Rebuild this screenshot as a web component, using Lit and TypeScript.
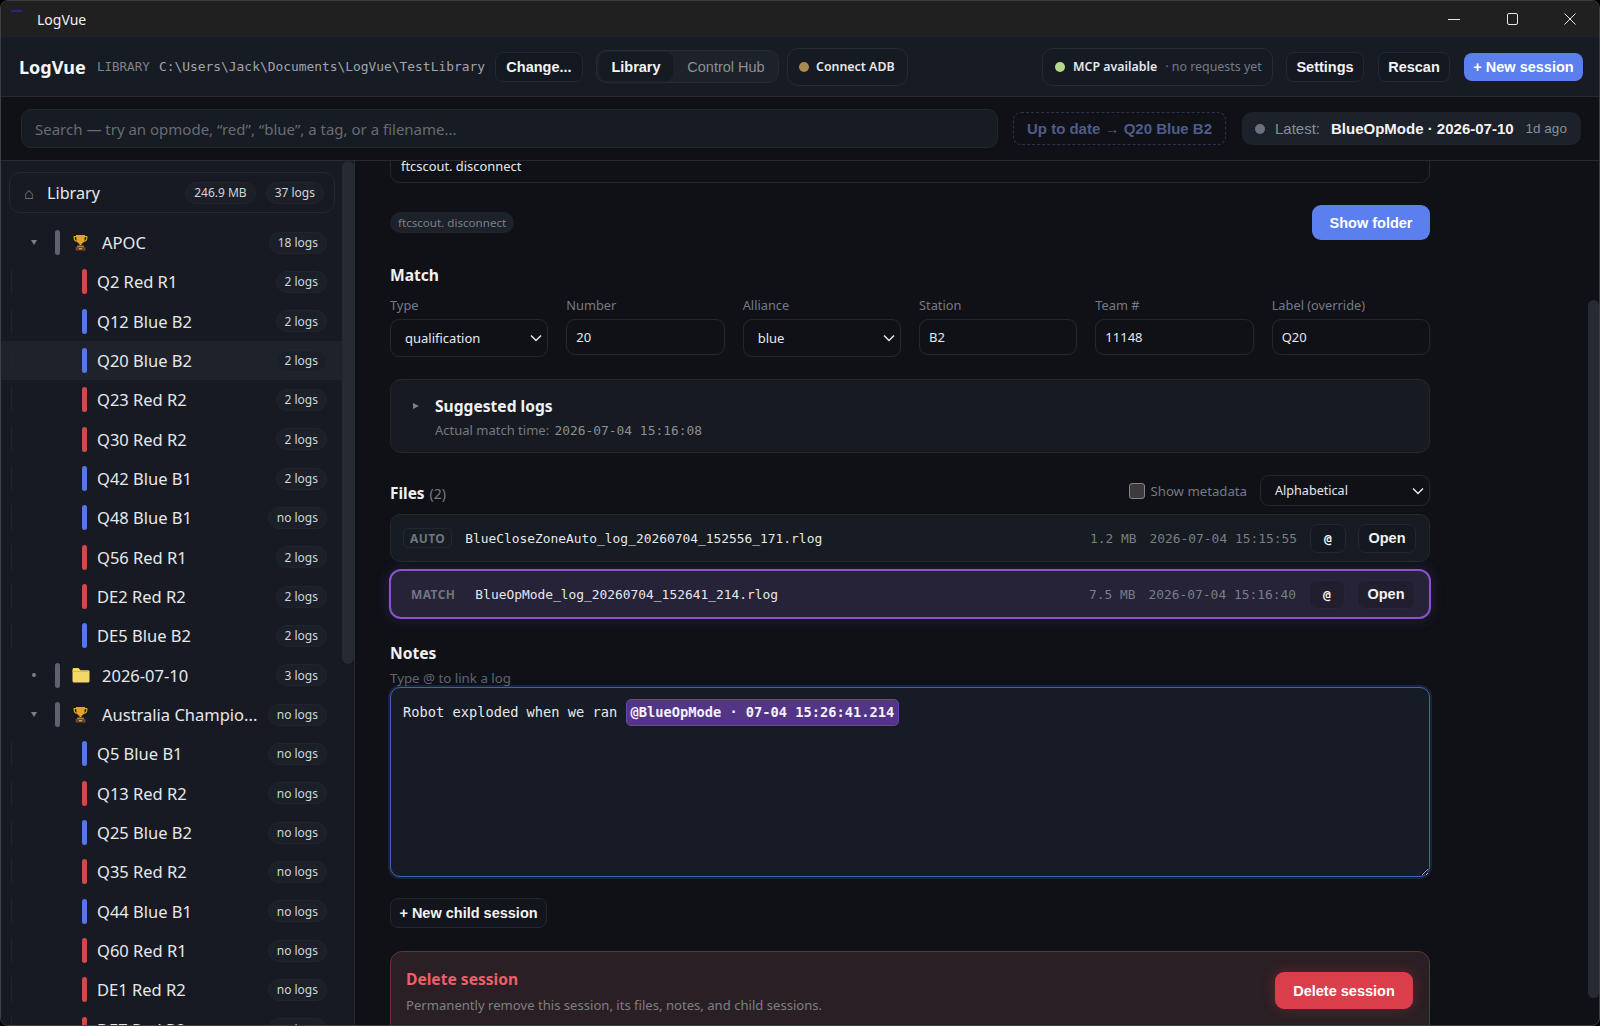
import { LitElement, html, css, svg } from "lit";
import { customElement } from "lit/decorators.js";

type Row = { kind: "group" | "item"; label: string; logs: string; alliance?: "red" | "blue"; icon?: "trophy" | "folder"; caret?: "down" | "dot"; selected?: boolean };

const item = (label: string, logs: string, selected = false): Row => ({
  kind: "item", label, logs, selected,
  alliance: label.includes("Red") ? "red" : "blue",
});

const rows: Row[] = [
  { kind: "group", label: "APOC", logs: "18 logs", icon: "trophy", caret: "down" },
  item("Q2 Red R1", "2 logs"),
  item("Q12 Blue B2", "2 logs"),
  item("Q20 Blue B2", "2 logs", true),
  item("Q23 Red R2", "2 logs"),
  item("Q30 Red R2", "2 logs"),
  item("Q42 Blue B1", "2 logs"),
  item("Q48 Blue B1", "no logs"),
  item("Q56 Red R1", "2 logs"),
  item("DE2 Red R2", "2 logs"),
  item("DE5 Blue B2", "2 logs"),
  { kind: "group", label: "2026-07-10", logs: "3 logs", icon: "folder", caret: "dot" },
  { kind: "group", label: "Australia Champio...", logs: "no logs", icon: "trophy", caret: "down" },
  item("Q5 Blue B1", "no logs"),
  item("Q13 Red R2", "no logs"),
  item("Q25 Blue B2", "no logs"),
  item("Q35 Red R2", "no logs"),
  item("Q44 Blue B1", "no logs"),
  item("Q60 Red R1", "no logs"),
  item("DE1 Red R2", "no logs"),
  item("DE7 Red R2", "no logs"),
];

const trophy = svg`<svg width="15" height="17" viewBox="0 0 15 17"><path d="M3 1h9v1h2.400v2.200c0 2-1.300 3.300-3.400 3.600-.6 1-1.400 1.600-2.400 1.900V11h-2.200V9.700c-1-.3-1.800-.9-2.400-1.900C1.900 7.500.6 6.200.6 4.200V2H3zM1.800 3.200v1c0 1.200.7 2.100 1.800 2.400-.2-1-.3-2.100-.3-3.400zm11.400 0h-1.500c0 1.300-.1 2.400-.3 3.400 1.100-.3 1.800-1.200 1.800-2.400z" fill="#e2a32e"/><path d="M4.500 11.500h6l.6 1.500H3.900z" fill="#b8842c"/><rect x="2.500" y="13" width="10" height="3.500" rx=".5" fill="#6b4a34"/><rect x="6" y="14" width="3" height="1.300" fill="#cfa45a"/></svg>`;
const folder = svg`<svg class="fld" width="18" height="16" viewBox="0 0 18 16"><path d="M.5 2.500C.5 1.700 1.100 1 2 1h4.500l2 2.200H16c.9 0 1.500.6 1.500 1.500V14c0 .8-.6 1.500-1.500 1.500H2C1.100 15.500.5 14.800.5 14z" fill="#f3d868"/><path d="M.5 4h17v1H.5z" fill="#d9b84c"/></svg>`;
const chevron = svg`<svg class="chev" width="12" height="8" viewBox="0 0 12 8"><path d="M1 1.500l5 5 5-5" fill="none" stroke="#e6e8ec" stroke-width="1.500"/></svg>`;

@customElement("app-root")
export class AppRoot extends LitElement {
  static styles = css`
    :host { display: block; width: 1600px; height: 1026px; background: #000; font-family: "Noto Sans", sans-serif; color: #e6e8ec; overflow: hidden; }
    * { box-sizing: border-box; }
    button { font-family: "Liberation Sans", Arial, sans-serif; font-weight: 700; font-size: 14.5px; color: #f2f3f5; cursor: pointer; padding: 0; white-space: nowrap; }
    .mono { font-family: "DejaVu Sans Mono", monospace; font-size: 12.9px; }
    .window { width: 1600px; height: 1026px; border: 1px solid #3c3f44; border-radius: 8px; overflow: hidden; display: flex; flex-direction: column; background: #0f1117; position: relative; }

    .title { height: 36px; flex: none; background: #202020; display: flex; align-items: center; padding-left: 36px; font-size: 14px; color: #f0f0f0; position: relative; }
    .appglyph { position: absolute; left: 10px; top: 9px; width: 11px; height: 2px; background: #23238c; }
    .winctl { margin-left: auto; display: flex; align-items: center; height: 100%; }
    .winctl div { width: 58px; display: flex; justify-content: center; align-items: center; }

    .head { height: 60px; flex: none; background: #171b24; border-bottom: 1px solid #262a32; display: flex; align-items: center; padding-left: 18px; padding-right: 16px; }
    .brand { font-size: 18px; font-weight: 700; color: #f5f6f8; width: 78px; }
    .libl { font-size: 12.5px; color: #7d838d; width: 62px; }
    .path { color: #a0a5ad; width: 336px; white-space: nowrap; }
    .btn { height: 30px; background: #141821; border: 1px solid #242832; border-radius: 8px; }
    .change { width: 88px; }
    .tabs { margin-left: 13px; height: 33px; width: 183px; background: #1d2129; border: 1px solid #262a33; border-radius: 10px; display: flex; align-items: center; padding: 0 2px; }
    .tab { height: 29px; border: 0; background: none; border-radius: 8px; width: 74px; }
    .tab.on { background: #161a22; }
    .tab.off { font-weight: 400; color: #8a8f98; flex: 1; padding-left: 3px; }
    .pill { height: 38px; border: 1px solid #262a33; border-radius: 11px; display: flex; align-items: center; background: #161a23; font-size: 12.4px; font-weight: 600; white-space: nowrap; }
    .adb { margin-left: 8px; width: 121px; padding-left: 11px; gap: 7px; }
    .dot { width: 10px; height: 10px; border-radius: 50%; flex: none; }
    .mcp { margin-left: auto; width: 231px; padding-left: 12px; gap: 8px; }
    .mcp em { font-style: normal; font-weight: 400; color: #767c86; }
    .settings { margin-left: 13px; width: 78px; }
    .rescan { margin-left: 14px; width: 72px; }
    .new { margin-left: 14px; width: 119px; height: 28px; background: #5b7fee; border: 0; color: #fff; }

    .search { height: 64px; flex: none; background: #0f1117; border-bottom: 1px solid #262a32; display: flex; align-items: center; padding-left: 20px; padding-right: 18px; }
    .sbox { width: 977px; height: 39px; background: #171b22; border: 1px solid #23272f; border-radius: 10px; padding-left: 13px; display: flex; align-items: center; font-size: 15px; color: #676c75; }
    .uptodate { margin-left: 15px; width: 213px; height: 33px; background: none; border: 1px dashed #2c3350; border-radius: 8px; color: #4f5c88; font-size: 15px; }
    .latest { margin-left: 16px; width: 339px; height: 33px; background: #1d2129; border: 0; border-radius: 10px; display: flex; align-items: center; padding-left: 13px; font-size: 15px; }
    .latest .l { font-weight: 400; color: #8a8f98; margin-left: 10px; }
    .latest .b { margin-left: 11px; color: #f2f3f5; }
    .latest .a { font-weight: 400; color: #8a8f98; margin-left: 12px; font-size: 13.5px; }

    .body { flex: 1; min-height: 0; display: flex; }
    .side { width: 354px; flex: none; background: #171a22; border-right: 1px solid #262a32; overflow: hidden; position: relative; padding: 11px 0 0 0; }
    .thumb { position: absolute; background: #262b33; border-radius: 6px; }
    .side .thumb { right: 0; top: 0; width: 12px; height: 503px; }
    .libr { margin-left: 8px; width: 326px; height: 41px; border: 1px solid #23272f; border-radius: 11px; display: flex; align-items: center; padding-left: 14px; font-size: 16.2px; color: #e6e8ec; margin-bottom: 10px; }
    .libr .home { color: #7a808a; width: 23px; font-size: 16px; }
    .chip { border: 1px solid #20242c; background: #1b1f27; border-radius: 11px; height: 22px; padding: 0 8px; display: flex; align-items: center; font-size: 12px; color: #d2d5da; white-space: nowrap; flex: none; }
    .libr .size { margin-left: auto; }
    .libr .count { margin-left: 10px; margin-right: 10px; }
    .row { height: 39.33px; width: 341px; display: flex; align-items: center; font-size: 16.5px; color: #e6e8ec; position: relative; white-space: nowrap; padding-right: 15px; }
    .row.sel { background: #1e222a; }
    .row .chip { margin-left: auto; }
    .row.item { padding-left: 81px; }
    .row.item::before { content: ""; position: absolute; left: 10px; top: 7px; width: 1px; height: 25px; background: #20242c; }
    .row.group { padding-left: 27px; }
    .bar { width: 5px; height: 25px; border-radius: 3px; flex: none; }
    .bar.red { background: #d04a4a; }
    .bar.blue { background: #5577e8; }
    .bar.grey { background: #5c6370; }
    .item .bar { margin-right: 10px; }
    .caret { width: 27px; flex: none; display: flex; }
    .caret i { display: block; }
    .caret i.down { width: 0; height: 0; border-left: 3.5px solid transparent; border-right: 3.5px solid transparent; border-top: 5px solid #7a808a; margin-left: 3px; }
    .caret i.dot { width: 4px; height: 4px; border-radius: 50%; background: #7a808a; margin-left: 4px; }
    .gicon { width: 42px; flex: none; display: flex; padding-left: 13px; }
    .gicon svg { display: block; flex: none; }
    .gicon .fld { margin-left: -1px; }

    .main { flex: 1; min-width: 0; position: relative; overflow: hidden; padding-left: 35px; }
    .main .thumb { right: 0; top: 139px; width: 11px; height: 698px; }
    .content { width: 1040px; margin-top: -12px; }
    .field { height: 34px; border: 1px solid #23272f; border-radius: 10px; display: flex; align-items: center; padding-left: 10px; font-size: 12.9px; color: #e6e8ec; }
    .tagrow { display: flex; justify-content: space-between; align-items: flex-start; margin-top: 22px; height: 35px; }
    .tag { margin-top: 7px; height: 21px; background: #1d2129; border-radius: 11px; padding: 0 8px; display: flex; align-items: center; font-size: 11.6px; color: #7a808a; }
    .primary { width: 118px; height: 35px; background: #5b7fee; border: 0; border-radius: 9px; color: #fff; }
    h3 { margin: 0; font-size: 15.6px; font-weight: 700; color: #f0f1f3; line-height: 22px; }
    .match { margin-top: 24px; }
    .grid { display: grid; grid-template-columns: repeat(6, 1fr); gap: 18px; margin-top: 10px; align-items: start; }
    .lab { font-size: 12.8px; color: #757b84; line-height: 18px; margin-bottom: 5px; }
    .inp { height: 36px; border: 1px solid #23272f; border-radius: 9px; display: flex; align-items: center; padding-left: 9px; font-size: 13px; color: #e6e8ec; }
    .sel2 { height: 36px; border: 1px solid #23272f; border-radius: 9px; display: flex; align-items: center; padding-left: 14px; padding-right: 5px; font-size: 13px; color: #e6e8ec; justify-content: space-between; }
    .sel2.tall { height: 38px; }
    .chev { display: block; }
    .sugg { margin-top: 22px; height: 74px; background: #171a20; border: 1px solid #23272f; border-radius: 11px; padding: 15px 0 0 20px; display: flex; }
    .sugg .tri { width: 0; height: 0; border-top: 3.5px solid transparent; border-bottom: 3.5px solid transparent; border-left: 6px solid #7a808a; margin: 8px 16px 0 2px; }
    .sugg .t { font-size: 15.6px; font-weight: 700; color: #f0f1f3; line-height: 22px; }
    .sugg .s { font-size: 13px; color: #757b84; line-height: 18px; margin-top: 4px; }
    .sugg .s .mono { color: #8a8f98; margin-left: 2px; }

    .fhead { display: flex; align-items: center; margin-top: 22px; height: 31px; }
    .fhead h3 { font-size: 15.4px; margin-top: 6px; }
    .fhead h3 span { font-weight: 400; color: #757b84; font-size: 14px; margin-left: 1px; }
    .cb { margin-left: auto; width: 16px; height: 16px; background: #3b3b3b; border: 1px solid #858585; border-radius: 3px; }
    .cbl { font-size: 13.2px; color: #757b84; margin-left: 6px; margin-right: 13px; }
    .sort { width: 170px; height: 31px; font-size: 12.6px; }
    .file { margin-top: 8px; height: 48px; background: #171b22; border: 1px solid #23272f; border-radius: 10px; display: flex; align-items: center; padding: 0 13px 0 12px; }
    .file.hot { margin: 7px -1px 0; height: 50px; background: #262238; border: 2px solid #8753cf; border-radius: 12px; padding: 0 14px 0 13px; box-shadow: 0 0 14px rgba(135, 83, 207, 0.22); }
    .badge { height: 20px; border: 1px solid #23272f; border-radius: 5px; padding: 0 6px; display: flex; align-items: center; font-size: 12px; font-weight: 700; letter-spacing: 0.4px; color: #6f7680; }
    .fname { margin-left: 13px; color: #e6e8ec; white-space: nowrap; }
    .fsize { margin-left: auto; color: #7a7e85; }
    .ftime { margin-left: 13px; color: #7a7e85; }
    .at { margin-left: 13px; width: 36px; height: 29px; background: #14181f; border: 1px solid #23272f; border-radius: 8px; font-family: "DejaVu Sans Mono", monospace; font-size: 13px; }
    .open { margin-left: 12px; width: 58px; height: 29px; background: #14181f; border: 1px solid #23272f; border-radius: 8px; }
    .hot .at, .hot .open { background: #211e30; border-color: #2a2639; }
    .notes { margin-top: 23px; }
    .hint { font-size: 13.3px; color: #5f656e; line-height: 18px; margin-top: 5px; }
    .ta { display: block; margin-top: 0; height: 190px; width: 1040px; background: #171b25; border: 1px solid #3f62b5; border-radius: 10px; box-shadow: 0 0 0 2px rgba(63, 98, 181, 0.22); padding: 11px 12px; font-family: "DejaVu Sans Mono", monospace; font-size: 13.7px; color: #e6e8ec; resize: both; overflow: auto; white-space: pre; line-height: 27px; }
    .ref { display: inline-block; height: 27px; line-height: 25px; background: #533586; border: 1px solid #6a45a8; border-radius: 5px; padding: 0 4px; font-weight: 700; color: #f5f2fb; }
    .child { margin-top: 21px; width: 157px; height: 30px; display: block; background: #12151b; border: 1px solid #23272f; border-radius: 8px; }
    .danger { margin-top: 23px; height: 100px; background: #2a1f24; border: 1px solid #6e2f33; border-radius: 12px; display: flex; align-items: flex-start; padding: 16px 16px 0 15px; }
    .danger .t { font-size: 15.6px; font-weight: 700; color: #e8606a; line-height: 22px; }
    .danger .s { font-size: 13.1px; color: #7b7f86; line-height: 18px; margin-top: 6px; }
    .del { margin-left: auto; margin-top: 4px; width: 138px; height: 37px; background: #d93f4a; border: 0; border-radius: 9px; color: #fff; box-shadow: 0 0 14px rgba(217, 63, 74, 0.3); }
  `;

  renderRow(r: Row) {
    if (r.kind === "item") {
      return html`<div class="row item ${r.selected ? "sel" : ""}"><span class="bar ${r.alliance}"></span><span>${r.label}</span><span class="chip">${r.logs}</span></div>`;
    }
    return html`<div class="row group"><span class="caret"><i class=${r.caret ?? ""}></i></span><span class="bar grey"></span><span class="gicon">${r.icon === "trophy" ? trophy : folder}</span><span>${r.label}</span><span class="chip">${r.logs}</span></div>`;
  }

  render() {
    return html`<div class="window">
      <div class="title">
        <span class="appglyph"></span>LogVue
        <div class="winctl">
          <div><svg width="12" height="12" viewBox="0 0 12 12"><path d="M0 6.500h12" stroke="#e8e8e8"/></svg></div>
          <div><svg width="11" height="12" viewBox="0 0 11 12"><rect x=".5" y=".5" width="10" height="11" rx="1.500" fill="none" stroke="#e8e8e8"/></svg></div>
          <div><svg width="12" height="12" viewBox="0 0 12 12"><path d="M.5.500l11 11M11.500.500l-11 11" stroke="#e8e8e8"/></svg></div>
        </div>
      </div>
      <div class="head">
        <div class="brand">LogVue</div>
        <div class="libl mono">LIBRARY</div>
        <div class="path mono">C:\\Users\\Jack\\Documents\\LogVue\\TestLibrary</div>
        <button class="btn change">Change...</button>
        <div class="tabs"><button class="tab on">Library</button><button class="tab off">Control Hub</button></div>
        <div class="pill adb"><span class="dot" style="background:#a88a4f"></span>Connect ADB</div>
        <div class="pill mcp"><span class="dot" style="background:#b5d98a"></span><span>MCP available</span><em>· no requests yet</em></div>
        <button class="btn settings">Settings</button>
        <button class="btn rescan">Rescan</button>
        <button class="btn new">+ New session</button>
      </div>
      <div class="search">
        <div class="sbox">Search — try an opmode, “red”, “blue”, a tag, or a filename...</div>
        <button class="uptodate">Up to date → Q20 Blue B2</button>
        <button class="latest"><span class="dot" style="background:#6b7280"></span><span class="l">Latest:</span><span class="b">BlueOpMode · 2026-07-10</span><span class="a">1d ago</span></button>
      </div>
      <div class="body">
        <aside class="side">
          <div class="thumb"></div>
          <div class="libr"><span class="home">⌂</span>Library<span class="chip size">246.9 MB</span><span class="chip count">37 logs</span></div>
          ${rows.map((r) => this.renderRow(r))}
        </aside>
        <main class="main">
          <div class="thumb"></div>
          <div class="content">
            <div class="field">ftcscout. disconnect</div>
            <div class="tagrow"><span class="tag">ftcscout. disconnect</span><button class="primary">Show folder</button></div>
            <div class="match">
              <h3>Match</h3>
              <div class="grid">
                <div><div class="lab">Type</div><div class="sel2 tall">qualification${chevron}</div></div>
                <div><div class="lab">Number</div><div class="inp">20</div></div>
                <div><div class="lab">Alliance</div><div class="sel2 tall">blue${chevron}</div></div>
                <div><div class="lab">Station</div><div class="inp">B2</div></div>
                <div><div class="lab">Team #</div><div class="inp">11148</div></div>
                <div><div class="lab">Label (override)</div><div class="inp">Q20</div></div>
              </div>
            </div>
            <div class="sugg"><span class="tri"></span><div><div class="t">Suggested logs</div><div class="s">Actual match time: <span class="mono">2026-07-04 15:16:08</span></div></div></div>
            <div class="fhead"><h3>Files <span>(2)</span></h3><span class="cb"></span><span class="cbl">Show metadata</span><div class="sel2 sort">Alphabetical${chevron}</div></div>
            <div class="file"><span class="badge">AUTO</span><span class="fname mono">BlueCloseZoneAuto_log_20260704_152556_171.rlog</span><span class="fsize mono">1.2 MB</span><span class="ftime mono">2026-07-04 15:15:55</span><button class="at">@</button><button class="open">Open</button></div>
            <div class="file hot"><span class="badge">MATCH</span><span class="fname mono">BlueOpMode_log_20260704_152641_214.rlog</span><span class="fsize mono">7.5 MB</span><span class="ftime mono">2026-07-04 15:16:40</span><button class="at">@</button><button class="open">Open</button></div>
            <div class="notes"><h3>Notes</h3><div class="hint">Type @ to link a log</div></div>
            <div class="ta">Robot exploded when we ran <span class="ref">@BlueOpMode · 07-04 15:26:41.214</span></div>
            <button class="child">+ New child session</button>
            <div class="danger"><div><div class="t">Delete session</div><div class="s">Permanently remove this session, its files, notes, and child sessions.</div></div><button class="del">Delete session</button></div>
          </div>
        </main>
      </div>
    </div>`;
  }
}
